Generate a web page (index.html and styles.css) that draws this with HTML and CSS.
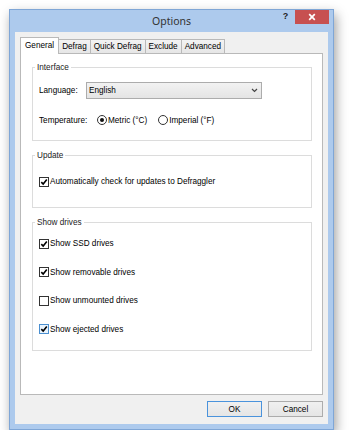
FILE: index.html
```html
<!DOCTYPE html>
<html>
<head>
<meta charset="utf-8">
<link rel="stylesheet" href="styles.css">
</head>
<body>
<div class="window">
  <div class="titlebar">
    <div></div>
    <div class="title">Options</div>
    <div class="controls">
      <span class="help">?</span>
      <span class="close"><svg width="8" height="8" viewBox="0 0 8 8"><path d="M1.2 1.2L6.8 6.8M6.8 1.2L1.2 6.8" stroke="#fff" stroke-width="1.7" fill="none"/></svg></span>
    </div>
  </div>
  <div class="client">
    <div class="tabs">
      <div class="tab active">General</div>
      <div class="tab">Defrag</div>
      <div class="tab">Quick Defrag</div>
      <div class="tab">Exclude</div>
      <div class="tab">Advanced</div>
    </div>
    <div class="panel">
      <fieldset class="group interface">
        <legend>Interface</legend>
        <div class="row lang">
          <span class="lbl">Language:</span>
          <div class="select"><span>English</span><svg width="7" height="5" viewBox="0 0 7 5"><path d="M1 1L3.5 3.5L6 1" stroke="#444" stroke-width="1.2" fill="none"/></svg></div>
        </div>
        <div class="row temp">
          <span class="lbl">Temperature:</span>
          <label class="radio"><span class="rb on"></span>Metric (°C)</label>
          <label class="radio second"><span class="rb"></span>Imperial (°F)</label>
        </div>
      </fieldset>
      <fieldset class="group update">
        <legend>Update</legend>
        <label class="check"><span class="cb"><svg width="8" height="8" viewBox="0 0 8 8"><path d="M1.3 4.1L3.2 6.1L6.8 1.6" stroke="#000" stroke-width="1.6" fill="none"/></svg></span>Automatically check for updates to Defraggler</label>
      </fieldset>
      <fieldset class="group drives">
        <legend>Show drives</legend>
        <label class="check"><span class="cb"><svg width="8" height="8" viewBox="0 0 8 8"><path d="M1.3 4.1L3.2 6.1L6.8 1.6" stroke="#000" stroke-width="1.6" fill="none"/></svg></span>Show SSD drives</label>
        <label class="check"><span class="cb"><svg width="8" height="8" viewBox="0 0 8 8"><path d="M1.3 4.1L3.2 6.1L6.8 1.6" stroke="#000" stroke-width="1.6" fill="none"/></svg></span>Show removable drives</label>
        <label class="check"><span class="cb"></span>Show unmounted drives</label>
        <label class="check"><span class="cb hover"><svg width="8" height="8" viewBox="0 0 8 8"><path d="M1.3 4.1L3.2 6.1L6.8 1.6" stroke="#000" stroke-width="1.6" fill="none"/></svg></span>Show ejected drives</label>
      </fieldset>
    </div>
    <div class="buttons">
      <button class="btn default">OK</button>
      <button class="btn">Cancel</button>
    </div>
  </div>
</div>
</body>
</html>
```

FILE: styles.css
```css
html, body {
  margin: 0;
  background: #fff;
}
body {
  font-family: "Liberation Sans", Arial, sans-serif;
  font-size: 8.2px;
  color: #000;
}
.window {
  margin: 9px 0 0 9px;
  width: 325px;
  height: 421px;
  box-sizing: border-box;
  border: 1px solid #7fa6d6;
  background: #adcaed;
  display: flex;
  flex-direction: column;
  box-shadow: 2px 5px 11px rgba(0, 0, 0, 0.38);
}
.titlebar {
  height: 22px;
  flex: none;
  display: grid;
  grid-template-columns: 1fr auto 1fr;
  align-items: start;
}
.title {
  font-family: "Noto Sans", "Open Sans", sans-serif;
  font-size: 10.5px;
  line-height: 22px;
  color: #333;
}
.controls {
  display: flex;
  justify-content: flex-end;
  align-items: flex-start;
  padding-right: 4px;
}
.help {
  width: 11px;
  margin-right: 4px;
  text-align: center;
  font-weight: bold;
  font-size: 9px;
  line-height: 12px;
  color: #222;
}
.close {
  width: 34px;
  height: 14px;
  background: #c75050;
  display: flex;
  align-items: center;
  justify-content: center;
}
.close svg { display: block; }
.client {
  flex: 1;
  margin: 0 5px 5px;
  background: #f0f0f0;
  padding: 5px 5px 7px;
  display: flex;
  flex-direction: column;
}
.tabs {
  display: flex;
  align-items: flex-end;
  margin-bottom: -1px;
  position: relative;
  z-index: 1;
  height: 17px;
}
.tab {
  height: 15px;
  box-sizing: border-box;
  border: 1px solid #b9b9b9;
  background: linear-gradient(#f3f3f3, #e6e6e6);
  padding: 0 3px;
  line-height: 13px;
  margin-left: -1px;
  color: #000;
}
.tab.active {
  height: 17px;
  margin-left: 0;
  border-bottom: none;
  background: #fff;
  padding: 0 4px;
  line-height: 16px;
  position: relative;
  z-index: 2;
}
.panel {
  flex: 1;
  background: #fff;
  border: 1px solid #b9b9b9;
  padding: 8px 10px 0 11px;
  display: flex;
  flex-direction: column;
}
.group {
  margin: 0;
  min-width: 0;
  border: 1px solid #dcdcdc;
  padding: 0 0 0 6px;
}
.group legend {
  padding: 0 2px;
  margin-left: -4px;
  line-height: 11px;
  color: #222;
}
.interface { padding-top: 9px; padding-bottom: 14px; }
.update { margin-top: 9px; padding-top: 15px; padding-bottom: 20px; }
.drives {
  margin-top: 9px;
  padding-top: 10px;
  padding-bottom: 15px;
  display: flex;
  flex-direction: column;
  gap: 17.5px;
}
.row {
  display: flex;
  align-items: center;
}
.lang { height: 17px; }
.lang .lbl { width: 47px; }
.temp { height: 12px; margin-top: 15px; }
.temp .lbl { width: 58px; }
.select {
  width: 176px;
  height: 17px;
  box-sizing: border-box;
  border: 1px solid #acacac;
  background: linear-gradient(#f2f2f2, #e4e4e4);
  display: flex;
  align-items: center;
  justify-content: space-between;
  padding: 0 3px 0 2px;
}
.select svg { display: block; }
.radio {
  display: flex;
  align-items: center;
}
.radio.second { margin-left: 11px; }
.rb {
  width: 10px;
  height: 10px;
  box-sizing: border-box;
  border: 1px solid #333;
  border-radius: 50%;
  background: #fff;
  margin-right: 1px;
  display: flex;
  align-items: center;
  justify-content: center;
}
.rb.on::after {
  content: "";
  width: 4px;
  height: 4px;
  border-radius: 50%;
  background: #111;
}
.check {
  display: flex;
  align-items: center;
  height: 11px;
}
.cb {
  width: 10px;
  height: 10px;
  box-sizing: border-box;
  border: 1px solid #333;
  background: #fff;
  margin-right: 1px;
  display: flex;
  align-items: center;
  justify-content: center;
}
.cb svg { display: block; }
.cb.hover {
  border-color: #4a8fd0;
  background: #eaf4fd;
}
.buttons {
  display: flex;
  justify-content: flex-end;
  gap: 6px;
  margin-top: 6px;
}
.btn {
  width: 55px;
  height: 16px;
  box-sizing: border-box;
  border: 1px solid #acacac;
  background: linear-gradient(#f0f0f0, #e5e5e5);
  font: inherit;
  color: #000;
  padding: 0;
}
.btn.default {
  border-color: #4a93dc;
}
```
